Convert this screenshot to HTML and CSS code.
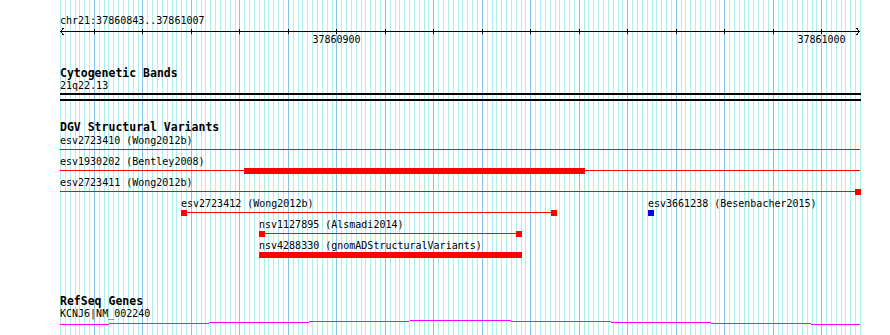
FILE: index.html
```html
<!DOCTYPE html>
<html lang="en">

<head>
    <meta charset="UTF-8">
    <title>chr21:37860843..37861007</title>
    <link rel="stylesheet" href="styles.css">
</head>

<body>
    <div class="view">
        <!-- base grid -->
        <svg class="grid" id="grid" width="890" height="335"></svg>

        <div class="tracks">
            <!-- ruler -->
            <div class="ruler">
                <div class="locus">chr21:37860843..37861007</div>
                <svg class="axis" id="axis" width="802" height="8">
                    <line x1="0" y1="4.5" x2="800" y2="4.5"></line>
                    <polyline points="3.5,1 0.5,4.5 3.5,8"></polyline>
                    <polyline points="796.5,1 799.5,4.5 796.5,8"></polyline>
                </svg>
                <div class="tick-labels" id="tickLabels"></div>
            </div>

            <!-- cytobands -->
            <div class="track cyto">
                <div class="track-title">Cytogenetic Bands</div>
                <div class="feature-name">21q22.13</div>
                <div class="band"></div>
            </div>

            <!-- DGV -->
            <div class="track dgv">
                <div class="track-title">DGV Structural Variants</div>
                <div class="rows">
                    <div class="row">
                        <span class="label" style="left: 0px">esv2723410 (Wong2012b)</span>
                        <span class="line" style="left: 0px; width: 800px"></span>
                    </div>
                    <div class="row">
                        <span class="label" style="left: 0px">esv1930202 (Bentley2008)</span>
                        <span class="line" style="left: 0px; width: 800px"></span>
                        <span class="bar" style="left: 184px; width: 341px"></span>
                    </div>
                    <div class="row">
                        <span class="label" style="left: 0px">esv2723411 (Wong2012b)</span>
                        <span class="line" style="left: 0px; width: 800px"></span>
                        <span class="box" style="left: 795px"></span>
                    </div>
                    <div class="row">
                        <span class="label" style="left: 121px">esv2723412 (Wong2012b)</span>
                        <span class="line" style="left: 121px; width: 375px"></span>
                        <span class="box" style="left: 121px"></span>
                        <span class="box" style="left: 491px"></span>
                        <span class="label" style="left: 588px">esv3661238 (Besenbacher2015)</span>
                        <span class="box blue" style="left: 588px"></span>
                    </div>
                    <div class="row">
                        <span class="label" style="left: 199px">nsv1127895 (Alsmadi2014)</span>
                        <span class="line" style="left: 199px; width: 262px"></span>
                        <span class="box" style="left: 199px"></span>
                        <span class="box" style="left: 456px"></span>
                    </div>
                    <div class="row">
                        <span class="label" style="left: 199px">nsv4288330 (gnomADStructuralVariants)</span>
                        <span class="bar" style="left: 199px; width: 263px"></span>
                    </div>
                </div>
            </div>

            <!-- genes -->
            <div class="track refseq">
                <div class="track-title">RefSeq Genes</div>
                <div class="feature-name">KCNJ6|NM_002240</div>
                <svg class="gene" width="800" height="8">
                    <polyline points="0,6.5 400,2.5 800,6.5"></polyline>
                </svg>
            </div>
        </div>
    </div>

    <script>
        const NS = "http://www.w3.org/2000/svg";
        const start = 37860843;
        const end = 37861007;
        const bases = end - start + 1;
        const scale = 800 / bases;

        function baseX(i) {
            return Math.round(i * scale) + 0.5;
        }

        function drawGrid() {
            const grid = document.getElementById("grid");
            for (let i = 0; i <= bases; i++) {
                const line = document.createElementNS(NS, "line");
                const x = 60 + baseX(i);
                line.setAttribute("x1", x);
                line.setAttribute("x2", x);
                line.setAttribute("y1", 0);
                line.setAttribute("y2", 335);
                line.setAttribute("class", (start + i) % 10 === 0 ? "major" : "minor");
                grid.appendChild(line);
            }
        }

        function drawAxis() {
            const axis = document.getElementById("axis");
            const labels = document.getElementById("tickLabels");
            for (let i = 0; i < bases; i++) {
                const pos = start + i;
                if (pos % 10 !== 0) continue;
                const tick = document.createElementNS(NS, "line");
                const x = baseX(i);
                tick.setAttribute("x1", x);
                tick.setAttribute("x2", x);
                tick.setAttribute("y1", 2);
                tick.setAttribute("y2", 7);
                axis.appendChild(tick);
                if (pos % 100 === 0) {
                    const label = document.createElement("span");
                    label.className = "tick-label";
                    label.style.left = `${x}px`;
                    label.innerText = pos;
                    labels.appendChild(label);
                }
            }
        }

        drawGrid();
        drawAxis();
    </script>
</body>

</html>
```

FILE: styles.css
```css
/* general */
body {
    margin: 0;
    background-color: #fff;
    color: #000;
    font-family: "DejaVu Sans Mono", "Liberation Mono", monospace;
    font-size: 10px;
    line-height: 12px;
}

.view {
    position: relative;
    width: 890px;
    height: 335px;
    overflow: hidden;
}

/* grid behind the tracks */
.grid {
    position: absolute;
    top: 0;
    left: 0;
}

.grid line {
    stroke-width: 1;
    shape-rendering: crispEdges;
}

.grid .minor {
    stroke: #afeeee;
}

.grid .major {
    stroke: #84c2f0;
}

.tracks {
    position: relative;
    width: 800px;
    padding-left: 60px;
}

/* ruler */
.locus {
    padding-top: 15px;
    white-space: nowrap;
}

.axis {
    display: block;
    overflow: visible;
}

.axis line,
.axis polyline {
    stroke: #000;
    stroke-width: 1;
    fill: none;
    shape-rendering: crispEdges;
}

.tick-labels {
    position: relative;
    height: 12px;
    margin-top: -1px;
}

.tick-label {
    position: absolute;
    top: 0;
    transform: translateX(-50%);
}

/* tracks */
.track-title {
    font-weight: bold;
    font-size: 11.5px;
    line-height: 13px;
    white-space: nowrap;
}

.feature-name {
    white-space: nowrap;
}

.cyto {
    margin-top: 21px;
}

.band {
    margin-top: 1px;
    margin-right: -1px;
    height: 4px;
    border-top: 2px solid #000;
    border-bottom: 2px solid #000;
}

.dgv {
    margin-top: 20px;
}

.rows {
    margin-top: 1px;
}

.row {
    position: relative;
    height: 21px;
}

.label {
    position: absolute;
    top: 0;
    white-space: nowrap;
}

.line {
    position: absolute;
    top: 14px;
    height: 1px;
    background-color: #f00;
}

.bar {
    position: absolute;
    top: 12px;
    height: 6px;
    background-color: #f00;
}

.box {
    position: absolute;
    top: 12px;
    width: 6px;
    height: 6px;
    background-color: #f00;
}

.box.blue {
    background-color: #00f;
}

.refseq {
    margin-top: 34px;
}

.gene {
    display: block;
    margin-top: -2px;
}

.gene polyline {
    fill: none;
    stroke: #f0f;
    stroke-width: 1;
    shape-rendering: crispEdges;
}
```
